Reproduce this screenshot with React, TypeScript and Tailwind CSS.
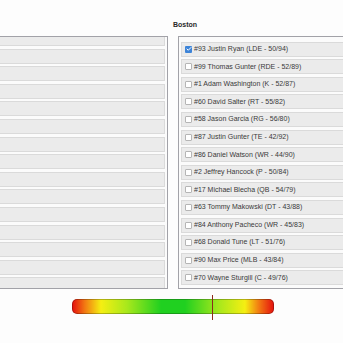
import { Check } from 'lucide-react'

const BOSTON = [
  { label: '#93 Justin Ryan (LDE - 50/94)', checked: true },
  { label: '#99 Thomas Gunter (RDE - 52/89)' },
  { label: '#1 Adam Washington (K - 52/87)' },
  { label: '#60 David Salter (RT - 55/82)' },
  { label: '#58 Jason Garcia (RG - 56/80)' },
  { label: '#87 Justin Gunter (TE - 42/92)' },
  { label: '#86 Daniel Watson (WR - 44/90)' },
  { label: '#2 Jeffrey Hancock (P - 50/84)' },
  { label: '#17 Michael Blecha (QB - 54/79)' },
  { label: '#63 Tommy Makowski (DT - 43/88)' },
  { label: '#84 Anthony Pacheco (WR - 45/83)' },
  { label: '#68 Donald Tune (LT - 51/76)' },
  { label: '#90 Max Price (MLB - 43/84)' },
  { label: '#70 Wayne Sturgill (C - 49/76)' },
]

const LEFT_ROWS = Array.from({ length: 15 }, (_, i) => i)

function Box({ checked }: { checked?: boolean }) {
  if (checked) {
    return (
      <span className="flex h-[7px] w-[7px] shrink-0 items-center justify-center rounded-[1px] bg-[#3d84d8]">
        <Check className="h-[6px] w-[6px] text-white" strokeWidth={4} />
      </span>
    )
  }
  return <span className="h-[7px] w-[7px] shrink-0 rounded-[1px] border border-[#b5b5b5] bg-white" />
}

export default function App() {
  return (
    <div className="relative h-[343px] w-[343px] overflow-hidden bg-[#fdfdfd] font-['Liberation_Sans',Arial,sans-serif]">
      <div className="ml-[-40px] flex gap-[10px] pt-[19px]">
        {/* other team, scrolled off to the left */}
        <div className="w-[208px] shrink-0">
          <div className="h-[17px]" />
          <div className="h-[253px] overflow-hidden border border-[#a2a2a8] bg-[#fbfbfb] pr-[2px]">
            <div className="mt-[-6px] flex flex-col gap-[2.6px]">
              {LEFT_ROWS.map(i => (
                <div key={i} className="h-[15px] border border-[#dadada] bg-[#ebebeb]" />
              ))}
            </div>
          </div>
        </div>

        {/* Boston */}
        <div className="w-[220px] shrink-0">
          <div className="ml-[-5px] h-[17px] text-[7px] font-bold leading-[12px] text-[#2a2a2a]">Boston</div>
          <div className="h-[253px] overflow-hidden border border-[#a2a2a8] bg-[#fbfbfb] pl-[2px] pt-[4.7px]">
            <div className="flex flex-col gap-[2.6px]">
              {BOSTON.map(p => (
                <div key={p.label} className="flex h-[15px] items-center gap-[2px] border border-[#dadada] bg-[#ebebeb] pl-[3px]">
                  <Box checked={p.checked} />
                  <span className="whitespace-nowrap text-[7px] text-[#3a3a3a]">{p.label}</span>
                </div>
              ))}
            </div>
          </div>
        </div>
      </div>

      {/* rating bar */}
      <div className="relative ml-[72px] mt-[10px] h-[15px] w-[202px] rounded-[5px] border border-black/25 bg-[linear-gradient(to_right,#e5160f_0%,#f27a12_6%,#f5ef12_14%,#a8e81c_27%,#20d020_44%,#20d020_56%,#a8e81c_73%,#f5ef12_86%,#f27a12_93%,#e5160f_100%)]">
        <div className="absolute left-[139px] top-[-5px] h-[25px] w-px bg-[#8e2a1a]" />
      </div>
    </div>
  )
}
